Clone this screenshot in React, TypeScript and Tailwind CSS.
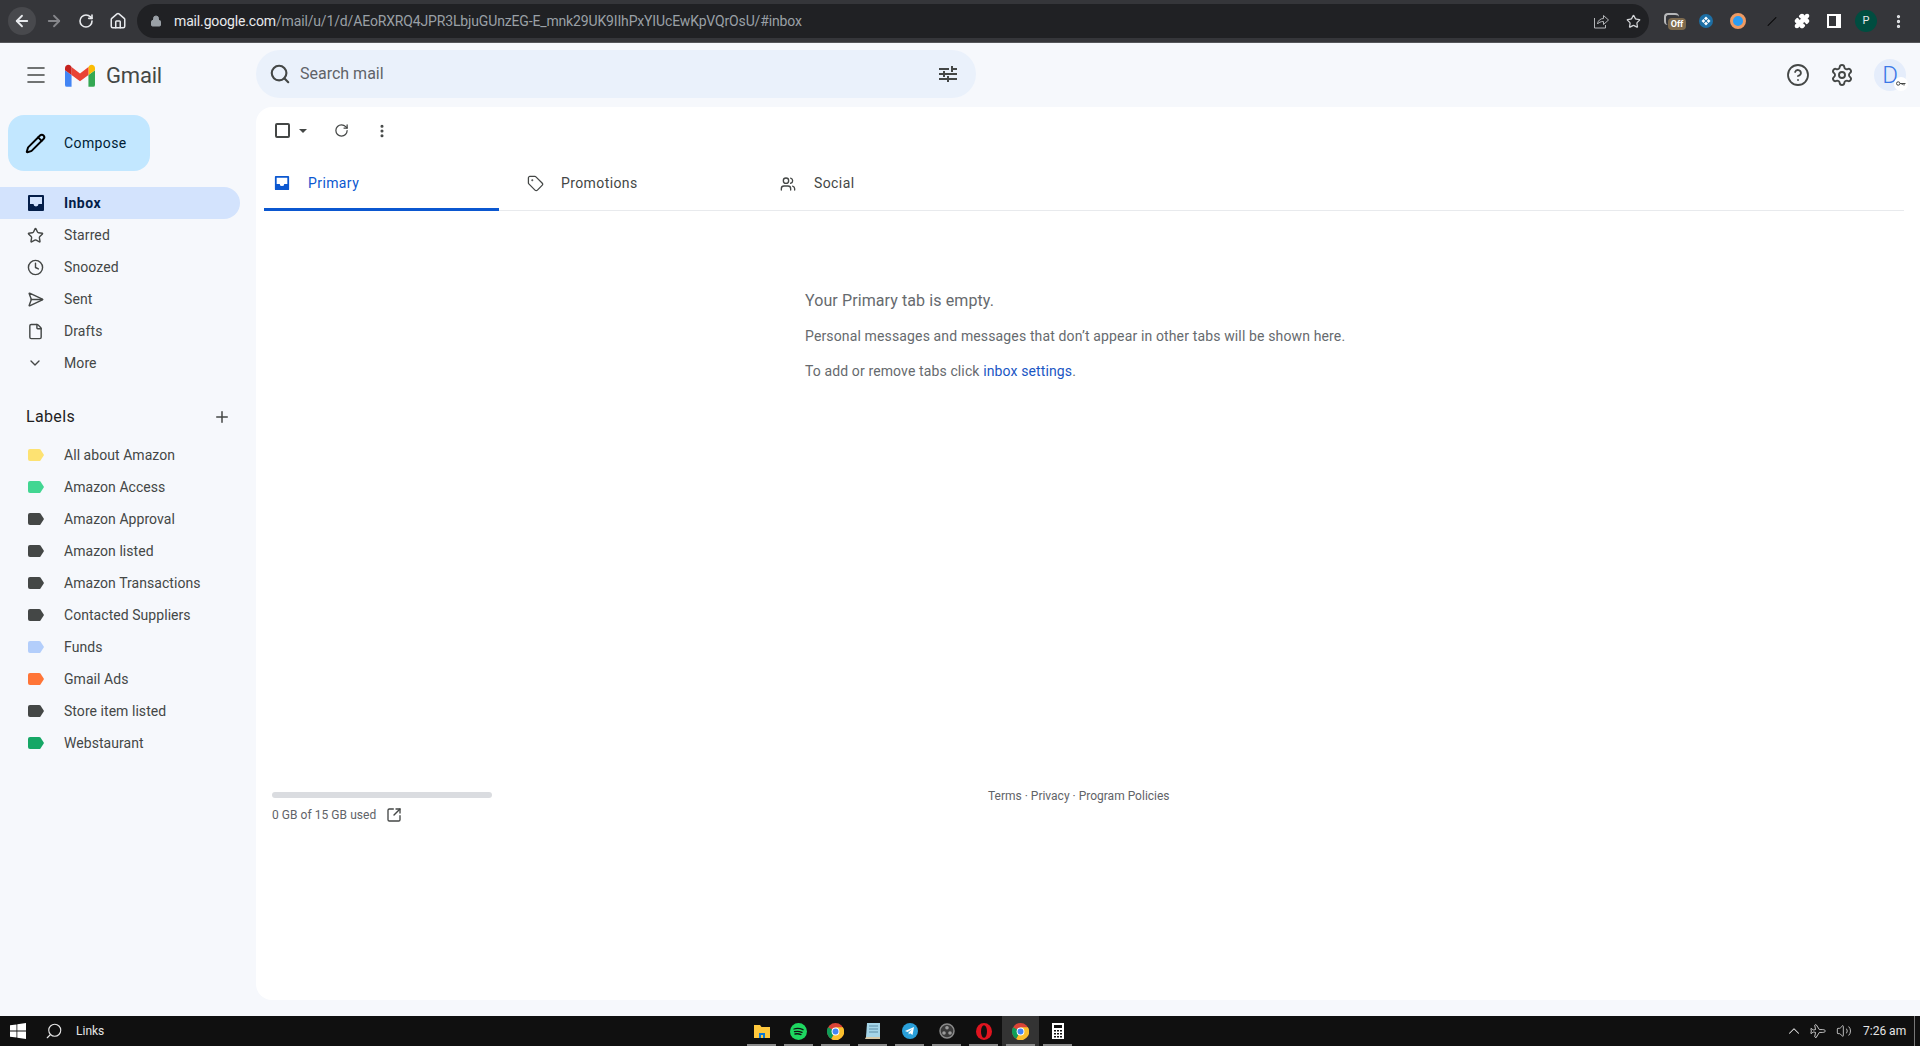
import React from "react";
import { ArrowLeft, ArrowRight, RotateCw, Home, Lock, Star, Puzzle, MoreVertical, Menu, Search, CircleHelp, Settings, Clock, SendHorizontal, File, ChevronDown, Plus, Tag, Users, SquareArrowOutUpRight, Pencil, ChevronUp, Plane, Volume2 } from "lucide-react";

const Inbox = ({ c }: { c: string }) => (
  <svg width="18" height="18" viewBox="0 0 18 18" className={c} fill="currentColor">
    <path fillRule="evenodd" d="M2 1h14a1 1 0 0 1 1 1v14a1 1 0 0 1-1 1H2a1 1 0 0 1-1-1V2a1 1 0 0 1 1-1Zm1 2v7h3.5a2.5 2.5 0 0 0 5 0H15V3H3Z" />
  </svg>
);

const LabelIcon = ({ color }: { color: string }) => (
  <svg width="16" height="12" viewBox="0 0 16 12" fill={color}>
    <path d="M2 0h9.2c.5 0 1 .2 1.3.6L16 6l-3.5 5.4c-.3.4-.8.6-1.3.6H2a2 2 0 0 1-2-2V2a2 2 0 0 1 2-2Z" />
  </svg>
);

const nav = [
  { t: "Starred", i: <Star size={17} strokeWidth={2} /> },
  { t: "Snoozed", i: <Clock size={17} strokeWidth={2} /> },
  { t: "Sent", i: <SendHorizontal size={17} strokeWidth={2} /> },
  { t: "Drafts", i: <File size={17} strokeWidth={2} /> },
  { t: "More", i: <ChevronDown size={16} strokeWidth={2} /> },
];

const labels: [string, string][] = [
  ["All about Amazon", "#fde272"],
  ["Amazon Access", "#42d692"],
  ["Amazon Approval", "#444746"],
  ["Amazon listed", "#444746"],
  ["Amazon Transactions", "#444746"],
  ["Contacted Suppliers", "#444746"],
  ["Funds", "#b3cefb"],
  ["Gmail Ads", "#ff7537"],
  ["Store item listed", "#444746"],
  ["Webstaurant", "#16a766"],
];

function ChromeLogo({ size = 20 }: { size?: number }) {
  return (
    <svg width={size} height={size} viewBox="0 0 20 20">
      <circle cx="10" cy="10" r="10" fill="#db4437" />
      <path d="M10 10 1.3 5A10 10 0 0 0 5 18.7L10 10Z" fill="#0f9d58" />
      <path d="M10 10 5 18.7A10 10 0 0 0 18.7 5H10Z" fill="#fbc02d" />
      <circle cx="10" cy="10" r="4.6" fill="#fff" />
      <circle cx="10" cy="10" r="3.5" fill="#4285f4" />
    </svg>
  );
}

function TaskIcon({ children, active, bar = true }: { children: React.ReactNode; active?: boolean; bar?: boolean }) {
  return (
    <div className={`relative w-[37px] h-[30px] flex items-center justify-center ${active ? "bg-[#333333]" : ""}`}>
      {children}
      {bar && <div className="absolute bottom-0 left-[4px] right-[4px] h-[2px] bg-[#8a8a8a]" />}
    </div>
  );
}

export default function App() {
  return (
    <div className="w-[1920px] h-[1046px] overflow-hidden flex flex-col bg-[#f6f8fc] font-['Roboto',sans-serif]">
      {/* Browser toolbar */}
      <div className="h-[43px] shrink-0 bg-[#35363a] border-b border-[#55565a] flex items-center pl-[8px]">
        <div className="w-[28px] h-[28px] rounded-full bg-[#48494d] flex items-center justify-center text-[#e8eaed]">
          <ArrowLeft size={18} strokeWidth={2.4} />
        </div>
        <div className="w-[32px] flex justify-center text-[#85868a] ml-[2px]"><ArrowRight size={18} strokeWidth={2.4} /></div>
        <div className="w-[32px] flex justify-center text-[#e8eaed]"><RotateCw size={16} strokeWidth={2.4} /></div>
        <div className="w-[32px] flex justify-center text-[#e8eaed]"><Home size={18} strokeWidth={2} /></div>
        <div className="ml-[3px] w-[1512px] h-[34px] rounded-full bg-[#202124] flex items-center pl-[13px] pr-[8px] text-[14px]">
          <Lock size={12} className="text-[#9aa0a6] mr-[12px]" fill="#9aa0a6" />
          <span className="text-[14px] tracking-[-0.15px] text-[#e8eaed]">mail.google.com<span className="text-[#9aa0a6]">/mail/u/1/d/AEoRXRQ4JPR3LbjuGUnzEG-E_mnk29UK9IIhPxYIUcEwKpVQrOsU/#inbox</span></span>
          <svg width="16" height="16" viewBox="0 0 16 16" fill="none" stroke="#b4b6b9" strokeWidth="1" className="ml-auto">
            <path d="M1.500 5v10h11v-3" />
            <path d="M4.500 11c.3-3.500 3-5.500 6-5.500V2.500l5 4.500-5 4.500V8.500c-2.500 0-4.800.8-6 2.500Z" />
          </svg>
          <Star size={15} strokeWidth={2} className="ml-[17px] text-[#d3d5d8]" />
        </div>
        <div className="relative ml-[15px] w-[22px] h-[22px]">
          <div className="absolute left-0 top-[3px] w-[15px] h-[12px] rounded-sm border-t-2 border-l-2 border-[#b7b8ba]" />
          <div className="absolute left-[4px] top-[8px] h-[12px] w-[18px] rounded-sm bg-[#7d6a4e] text-white text-[9px] leading-[12px] font-bold text-center">Off</div>
        </div>
        <svg width="14" height="14" viewBox="0 0 14 14" className="ml-[13px]">
          <circle cx="7" cy="7" r="7" fill="#1d6fa5" />
          <path d="M7 2.500 9 4.500 7 6.200 5 4.500ZM7 7.800 9 9.500 7 11.500 5 9.500ZM2.500 7 4.500 5 6.200 7 4.500 9ZM7.800 7 9.500 5 11.500 7 9.500 9Z" fill="#fff" />
        </svg>
        <div className="ml-[17px] w-[16px] h-[16px] rounded-full bg-[#2a9df4] border-[3px] border-[#ee9a62]" />
        <div className="ml-[20px] w-[12px] h-[1px] bg-black -rotate-45" />
        <div className="ml-[16px] text-white"><Puzzle size={16} fill="white" /></div>
        <div className="ml-[17px] w-[14px] h-[14px] bg-white border-[2px] border-r-[5px] border-white flex"><div className="w-full bg-[#35363a]" /></div>
        <div className="ml-[14px] w-[22px] h-[22px] rounded-full bg-[#004d40] text-[#e8eaed] text-[11px] flex items-center justify-center">P</div>
        <div className="ml-[13px] text-[#e8eaed]"><MoreVertical size={17} strokeWidth={2.6} /></div>
      </div>

      {/* Gmail */}
      <div className="flex-1 flex flex-col min-h-0">
        {/* Header */}
        <div className="h-[64px] shrink-0 flex items-center text-[#444746]">
          <div className="w-[256px] flex items-center pl-[24px]">
            <Menu size={24} strokeWidth={1.6} />
            <svg width="30" height="23" viewBox="0 0 32 24" className="ml-[17px]">
              <path d="M2 24h5V11.5L0 6.5V22a2 2 0 0 0 2 2Z" fill="#4285f4" />
              <path d="M25 24h5a2 2 0 0 0 2-2V6.500l-7 5Z" fill="#34a853" />
              <path d="M25 3v8.500l7-5V4c0-3-3.400-4.600-5.800-2.800Z" fill="#fbbc04" />
              <path d="M7 11.500V3l9 6.800L25 3v8.500L16 18Z" fill="#ea4335" />
              <path d="M0 4v2.500l7 5V3L5.800 1.200C3.400-.6 0 1 0 4Z" fill="#c5221f" />
            </svg>
            <span className="ml-[11px] text-[22px] text-[#444746] tracking-[-0.2px]">Gmail</span>
          </div>
          <div className="w-[720px] h-[48px] rounded-[24px] bg-[#eaf1fb] flex items-center pl-[13px] pr-[19px] -mt-[2px]">
            <Search size={22} strokeWidth={2.3} />
            <span className="ml-[9px] text-[16px] text-[#5f6368]">Search mail</span>
            <svg width="18" height="16" viewBox="0 0 18 16" className="ml-auto" fill="#444746">
              <path d="M0 2h10v2H0ZM12 0h2v2h4v2h-4v2h-2ZM0 7h4v2H0ZM4 5h2v2h12v2H6v2H4ZM0 12h8v2H0ZM8 10h2v2h8v2h-8v2H8Z" />
            </svg>
          </div>
          <div className="ml-auto flex items-center pr-[14px]">
            <CircleHelp size={24} strokeWidth={1.8} />
            <Settings size={24} strokeWidth={1.9} className="ml-[20px]" />
            <div className="relative ml-[20px] w-[32px] h-[32px] rounded-full bg-[#e5edfb] flex items-center justify-center text-[#3b78e7] text-[24px] font-light">
              D
              <div className="absolute -right-[2px] bottom-0 w-[14px] h-[14px] rounded-full bg-white flex items-center justify-center">
                <svg width="10" height="6" viewBox="0 0 10 6" fill="none" stroke="#444746" strokeWidth="1">
                  <circle cx="2.200" cy="2.500" r="1.700" />
                  <path d="M4 2.500h5.500M8 2.500v2M6.200 2.500v1.500" />
                </svg>
              </div>
            </div>
          </div>
        </div>

        <div className="flex-1 flex min-h-0">
          {/* Sidebar */}
          <aside className="w-[256px] shrink-0 flex flex-col">
            <div className="ml-[8px] mt-[8px] w-[142px] h-[56px] rounded-[16px] bg-[#c2e7ff] flex items-center pl-[17px] text-[14px] tracking-[0.4px] text-[#001d35]">
              <Pencil size={21} strokeWidth={2.2} className="text-black" />
              <span className="ml-[18px]">Compose</span>
            </div>
            <div className="mt-[16px] w-[240px] h-[32px] rounded-r-full bg-[#d3e3fd] flex items-center pl-[27px] text-[14px] font-bold tracking-[0.45px] text-[#041e49]">
              <Inbox c="w-[18px] h-[18px] text-[#041e49]" />
              <span className="ml-[19px]">Inbox</span>
            </div>
            {nav.map((n) => (
              <div key={n.t} className="w-[240px] h-[32px] flex items-center text-[14px] tracking-[0.1px] text-[#444746]">
                <div className="w-[64px] pl-[27px] flex">{n.i}</div>
                <span>{n.t}</span>
              </div>
            ))}
            <div className="mt-[26px] mb-[10px] h-[24px] flex items-center justify-between pl-[26px] pr-[25px] text-[16px] tracking-[0.35px] text-[#1f1f1f]">
              <span>Labels</span>
              <Plus size={18} strokeWidth={2} className="text-[#444746]" />
            </div>
            {labels.map(([t, c]) => (
              <div key={t} className="w-[240px] h-[32px] flex items-center text-[14px] tracking-[0.05px] text-[#444746]">
                <div className="w-[64px] pl-[28px] flex"><LabelIcon color={c} /></div>
                <span>{t}</span>
              </div>
            ))}
          </aside>

          {/* Main */}
          <main className="flex-1 bg-white rounded-tl-[16px] rounded-bl-[16px] mb-[16px] flex flex-col text-[#444746]">
            <div className="h-[53px] shrink-0 flex items-center pl-[19px] pb-[6px]">
              <div className="w-[15px] h-[15px] border-2 border-[#444746] rounded-[2px]" />
              <div className="ml-[9px] w-0 h-0 border-x-[4px] border-x-transparent border-t-[4px] border-t-[#444746]" />
              <RotateCw size={15} strokeWidth={2} className="ml-[27px]" />
              <MoreVertical size={16} strokeWidth={2.6} className="ml-[25px]" />
            </div>
            <div className="ml-[8px] mr-[16px] h-[51px] shrink-0 flex border-b border-[#e8eaed] text-[14px] tracking-[0.4px]">
              <div className="w-[235px] h-[51px] border-b-[3px] border-[#0b57d0] flex items-center pl-[10px] pb-[2px] text-[#0b57d0]">
                <Inbox c="w-[16px] h-[16px]" />
                <span className="ml-[18px]">Primary</span>
              </div>
              <div className="w-[281px] flex items-center pl-[28px] pb-[3px]">
                <Tag size={17} strokeWidth={1.8} />
                <span className="ml-[17px]">Promotions</span>
              </div>
              <div className="flex items-center pb-[3px]">
                <Users size={16} strokeWidth={2} />
                <span className="ml-[18px]">Social</span>
              </div>
            </div>
            <div className="pl-[549px] pt-[78px] text-[#666a6e]">
              <div className="text-[16px] leading-[24px] tracking-[0.1px]">Your Primary tab is empty.</div>
              <div className="mt-[13px] text-[14px] leading-[20px] tracking-[0.14px]">Personal messages and messages that don’t appear in other tabs will be shown here.</div>
              <div className="mt-[15px] text-[14px] leading-[20px] tracking-[0.12px]">To add or remove tabs click <span className="text-[#1a56c4]">inbox settings</span>.</div>
            </div>
            <div className="mt-[411px] flex pl-[16px] text-[#5f6368]">
              <div className="w-[220px]">
                <div className="h-[6px] rounded-full bg-[#dadce0]" />
                <div className="mt-[8px] flex items-center text-[12px] leading-[18px] tracking-[0.05px]">
                  <span>0 GB of 15 GB used</span>
                  <SquareArrowOutUpRight size={16} strokeWidth={2} className="ml-[10px] text-[#444746]" />
                </div>
              </div>
              <div className="ml-[496px] -mt-[4px] text-[12px] leading-[16px]">Terms · Privacy · Program Policies</div>
            </div>
          </main>
        </div>
      </div>

      {/* Taskbar */}
      <div className="h-[30px] shrink-0 bg-[#101010] flex items-center text-[#e5e5e5]">
        <div className="w-[36px] pl-[10px]">
          <svg width="16" height="16" viewBox="0 0 16 16" fill="white"><path d="M0 2.300 6.500 1.400V7.600H0ZM7.300 1.300 16 0V7.600H7.300ZM0 8.400H6.500V14.600L0 13.700ZM7.300 8.400H16V16L7.300 14.700Z" /></svg>
        </div>
        <Search size={18} strokeWidth={1.5} className="ml-[9px] -scale-x-100" />
        <span className="ml-[13px] text-[12px]">Links</span>
        <div className="ml-[639px] flex">
          <TaskIcon>
            <svg width="16" height="15" viewBox="0 0 16 15"><path d="M0 1h6l1.500 2H16v11H0Z" fill="#ffc83d" /><path d="M5 14V9h6v5H9v-3H7v3Z" fill="#0f78d4" /></svg>
          </TaskIcon>
          <TaskIcon>
            <svg width="17" height="17" viewBox="0 0 17 17"><circle cx="8.500" cy="8.500" r="8.500" fill="#1ed760" /><path d="M4 6c3-1 6-.7 9 .7M4.500 8.700c2.500-.7 5-.5 7.500.7M5 11c2-.5 4-.3 6 .6" stroke="#111" strokeWidth="1.300" fill="none" strokeLinecap="round" /></svg>
          </TaskIcon>
          <TaskIcon><ChromeLogo size={17} /></TaskIcon>
          <TaskIcon>
            <svg width="15" height="16" viewBox="0 0 15 16"><path d="M2 0h13v14H1Z" fill="#a5d5e8" /><path d="M4 3h9M4 6h9M4 9h9" stroke="#5d8fa8" /><path d="M1 14h14v2H0Z" fill="#d7c9a8" /></svg>
          </TaskIcon>
          <TaskIcon>
            <svg width="16" height="16" viewBox="0 0 16 16"><circle cx="8" cy="8" r="8" fill="#2a9fd9" /><path d="M3 8 12 4 10.500 12 8 10.200 6.800 11.500 6.500 9.500 10.500 6 5.500 9Z" fill="#fff" /></svg>
          </TaskIcon>
          <TaskIcon>
            <svg width="16" height="16" viewBox="0 0 16 16"><circle cx="8" cy="8" r="7" fill="#3a3a3a" stroke="#8a8a8a" strokeWidth="1.500" /><circle cx="8" cy="4.800" r="1.800" fill="#9a9a9a" /><circle cx="5" cy="10" r="1.800" fill="#9a9a9a" /><circle cx="11" cy="10" r="1.800" fill="#9a9a9a" /></svg>
          </TaskIcon>
          <TaskIcon>
            <svg width="16" height="17" viewBox="0 0 16 17"><ellipse cx="8" cy="8.500" rx="8" ry="8.500" fill="#e0141f" /><ellipse cx="8" cy="8.500" rx="3" ry="6.300" fill="#101010" /></svg>
          </TaskIcon>
          <TaskIcon active><ChromeLogo size={17} /></TaskIcon>
          <TaskIcon>
            <svg width="12" height="16" viewBox="0 0 12 16"><path fillRule="evenodd" d="M0 0h12v16H0Zm2 2v3h8V2ZM2 7v1.500h2V7Zm3 0v1.500h2V7Zm3 0v1.500h2V7ZM2 10v1.500h2V10Zm3 0v1.500h2V10Zm3 0v1.500h2V10ZM2 13v1.500h2V13Zm3 0v1.500h2V13Zm3 0v1.500h2V13Z" fill="#fff" /></svg>
          </TaskIcon>
        </div>
        <div className="ml-auto flex items-center text-[#e5e5e5]">
          <ChevronUp size={18} strokeWidth={1.4} />
          <Plane size={16} strokeWidth={1.2} className="ml-[6px] rotate-45" />
          <Volume2 size={16} strokeWidth={1.2} className="ml-[11px]" />
          <span className="ml-[11px] text-[12px] w-[47px] whitespace-nowrap">7:26 am</span>
          <div className="ml-[4px] w-px h-[30px] bg-[#777777]" />
          <div className="w-[5px]" />
        </div>
      </div>
    </div>
  );
}
